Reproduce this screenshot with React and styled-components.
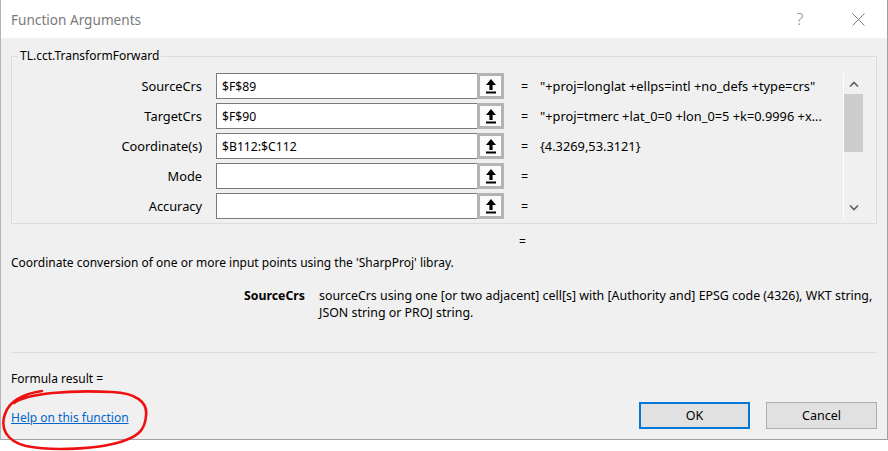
import React from 'react';
import styled, { createGlobalStyle } from 'styled-components';

const GlobalStyle = createGlobalStyle`
  html, body {
    margin: 0;
    padding: 0;
    background: #ffffff;
  }
  body {
    font-family: "Segoe UI", "Noto Sans", "Open Sans", sans-serif;
    font-size: 12px;
    color: #000;
  }
`;

const Screen = styled.div`
  position: relative;
  width: 888px;
  height: 451px;
  overflow: hidden;
  background: #ffffff;
`;

const Dialog = styled.div`
  width: 886px;
  height: 439px;
  background: #f0f0f0;
  border-left: 1px solid #b4b4b4;
  border-right: 1px solid #a0a0a0;
  border-bottom: 1px solid #a0a0a0;
  display: flex;
  flex-direction: column;
`;

const TitleBar = styled.div`
  height: 38px;
  background: #ffffff;
  display: flex;
  align-items: center;
  padding-left: 10px;
  flex-shrink: 0;
`;

const Title = styled.div`
  flex: 1;
  font-size: 13.6px;
  color: #7a7a7a;
`;

const HelpGlyph = styled.div`
  width: 12px;
  font-size: 16px;
  font-weight: 300;
  color: #8a8a8a;
  margin-right: 45px;
  text-align: center;
`;

const CloseBtn = styled.div`
  width: 14px;
  height: 14px;
  margin-right: 22px;
  display: flex;
  align-items: center;
  justify-content: center;
`;

const Body = styled.div`
  flex: 1;
  display: flex;
  flex-direction: column;
  padding: 0 10px;
`;

const GroupBox = styled.div`
  position: relative;
  box-sizing: border-box;
  margin-top: 18px;
  height: 168px;
  border: 1px solid #dcdcdc;
  display: flex;
  padding: 16px 13px 0 0;
`;

const Legend = styled.div`
  position: absolute;
  top: -9px;
  left: 6px;
  padding: 0 2px;
  background: #f0f0f0;
  font-size: 12px;
  line-height: 16px;
`;

const Rows = styled.div`
  flex: 1;
  display: flex;
  flex-direction: column;
  gap: 4px;
`;

const Row = styled.div`
  display: flex;
  align-items: center;
  height: 26px;
`;

const ArgLabel = styled.div`
  width: 190px;
  text-align: right;
  margin-right: 14px;
  font-size: 12.8px;
`;

const Field = styled.div`
  width: 288px;
  height: 26px;
  display: flex;
`;

const Input = styled.div`
  flex: 1;
  background: #ffffff;
  border: 1px solid #7a7a7a;
  border-right: none;
  padding-left: 5px;
  display: flex;
  align-items: center;
  font-size: 12.2px;
`;

const RefButton = styled.div`
  width: 27px;
  box-sizing: border-box;
  border: 3px solid #b4b4b4;
  background: #fbfbfb;
  display: flex;
  align-items: center;
  justify-content: center;
`;

const Eq = styled.div`
  margin-left: 17px;
  width: 19px;
  font-size: 12.5px;
`;

const Value = styled.div`
  white-space: nowrap;
  font-size: 12.8px;
`;

const ScrollBar = styled.div`
  width: 19px;
  height: 145px;
  border-left: 1px solid #ffffff;
  display: flex;
  flex-direction: column;
`;

const ScrollArrow = styled.div`
  height: 21px;
  display: flex;
  align-items: center;
  justify-content: center;
`;

const Thumb = styled.div`
  height: 58px;
  background: #cdcdcd;
`;

const Track = styled.div`
  flex: 1;
`;

const EqLine = styled.div`
  margin-top: 10px;
  padding-left: 508px;
  line-height: 16px;
`;

const Description = styled.div`
  margin-top: 5px;
  line-height: 16px;
`;

const ArgHelp = styled.div`
  display: flex;
  margin-top: 16px;
  line-height: 17px;
`;

const ArgHelpName = styled.div`
  width: 294px;
  text-align: right;
  font-weight: bold;
  font-size: 12.3px;
  margin-right: 14px;
  flex-shrink: 0;
`;

const ArgHelpText = styled.div`
  width: 560px;
  font-size: 12.4px;
`;

const Separator = styled.div`
  margin-top: 31px;
  height: 1px;
  background: #dcdcdc;
`;

const FormulaResult = styled.div`
  margin-top: 18px;
  line-height: 16px;
`;

const Footer = styled.div`
  margin-top: 15px;
  display: flex;
  align-items: center;
`;

const HelpLink = styled.a`
  color: #0066cc;
  text-decoration: underline;
  margin-top: 3px;
  flex: 1;
`;

const Button = styled.div`
  width: 111px;
  height: 27px;
  box-sizing: border-box;
  background: #e1e1e1;
  border: ${p => (p.$primary ? '2px solid #0078d7' : '1px solid #adadad')};
  display: flex;
  align-items: center;
  justify-content: center;
  font-size: 12.5px;
  margin-left: ${p => (p.$primary ? '0' : '16px')};
`;

const Scribble = styled.svg`
  position: absolute;
  left: 0;
  top: 380px;
  pointer-events: none;
`;

const UpArrowIcon = () => (
  <svg width="10" height="15" viewBox="0 0 10 15">
    <polygon points="5,0 10,6 6.6,6 6.6,11 3.4,11 3.4,6 0,6" fill="#000" />
    <rect x="0" y="12.5" width="10" height="2" fill="#000" />
  </svg>
);

const Chevron = ({ up }) => (
  <svg width="10" height="6" viewBox="0 0 10 6">
    <polyline
      points={up ? '1,5.5 5,1.5 9,5.5' : '1,0.5 5,4.5 9,0.5'}
      fill="none"
      stroke="#606060"
      strokeWidth="1.6"
    />
  </svg>
);

const args = [
  { name: 'SourceCrs', ref: '$F$89', value: '"+proj=longlat +ellps=intl +no_defs +type=crs"' },
  { name: 'TargetCrs', ref: '$F$90', value: '"+proj=tmerc +lat_0=0 +lon_0=5 +k=0.9996 +x...' },
  { name: 'Coordinate(s)', ref: '$B112:$C112', value: '{4.3269,53.3121}' },
  { name: 'Mode', ref: '', value: '' },
  { name: 'Accuracy', ref: '', value: '' },
];

const App = () => {
  return (
    <Screen>
      <GlobalStyle />
      <Dialog>
        <TitleBar>
          <Title>Function Arguments</Title>
          <HelpGlyph>?</HelpGlyph>
          <CloseBtn>
            <svg width="13" height="13" viewBox="0 0 13 13">
              <path d="M0.5 0.5 L12.5 12.5 M12.5 0.5 L0.5 12.5" stroke="#7a7a7a" strokeWidth="1" />
            </svg>
          </CloseBtn>
        </TitleBar>
        <Body>
          <GroupBox>
            <Legend>TL.cct.TransformForward</Legend>
            <Rows>
              {args.map((arg) => (
                <Row key={arg.name}>
                  <ArgLabel>{arg.name}</ArgLabel>
                  <Field>
                    <Input>{arg.ref}</Input>
                    <RefButton>
                      <UpArrowIcon />
                    </RefButton>
                  </Field>
                  <Eq>=</Eq>
                  <Value>{arg.value}</Value>
                </Row>
              ))}
            </Rows>
            <ScrollBar>
              <ScrollArrow>
                <Chevron up />
              </ScrollArrow>
              <Thumb />
              <Track />
              <ScrollArrow>
                <Chevron />
              </ScrollArrow>
            </ScrollBar>
          </GroupBox>
          <EqLine>=</EqLine>
          <Description>
            Coordinate conversion of one or more input points using the 'SharpProj' libray.
          </Description>
          <ArgHelp>
            <ArgHelpName>SourceCrs</ArgHelpName>
            <ArgHelpText>
              sourceCrs using one [or two adjacent] cell[s] with [Authority and] EPSG code (4326), WKT string, JSON string or PROJ string.
            </ArgHelpText>
          </ArgHelp>
          <Separator />
          <FormulaResult>Formula result =</FormulaResult>
          <Footer>
            <HelpLink>Help on this function</HelpLink>
            <Button $primary>OK</Button>
            <Button>Cancel</Button>
          </Footer>
        </Body>
      </Dialog>
      <Scribble width="160" height="71" viewBox="0 0 160 71">
        <path
          d="M14 23 C28 13, 70 10, 112 12 C136 13, 148 22, 146 36 C145 48, 140 55, 126 60 C100 70, 50 71, 26 66 C6 61, 0 48, 5 34 C9 22, 22 14, 42 11"
          fill="none"
          stroke="#ee1111"
          strokeWidth="2.6"
          strokeLinecap="round"
        />
      </Scribble>
    </Screen>
  );
};

export default App;
